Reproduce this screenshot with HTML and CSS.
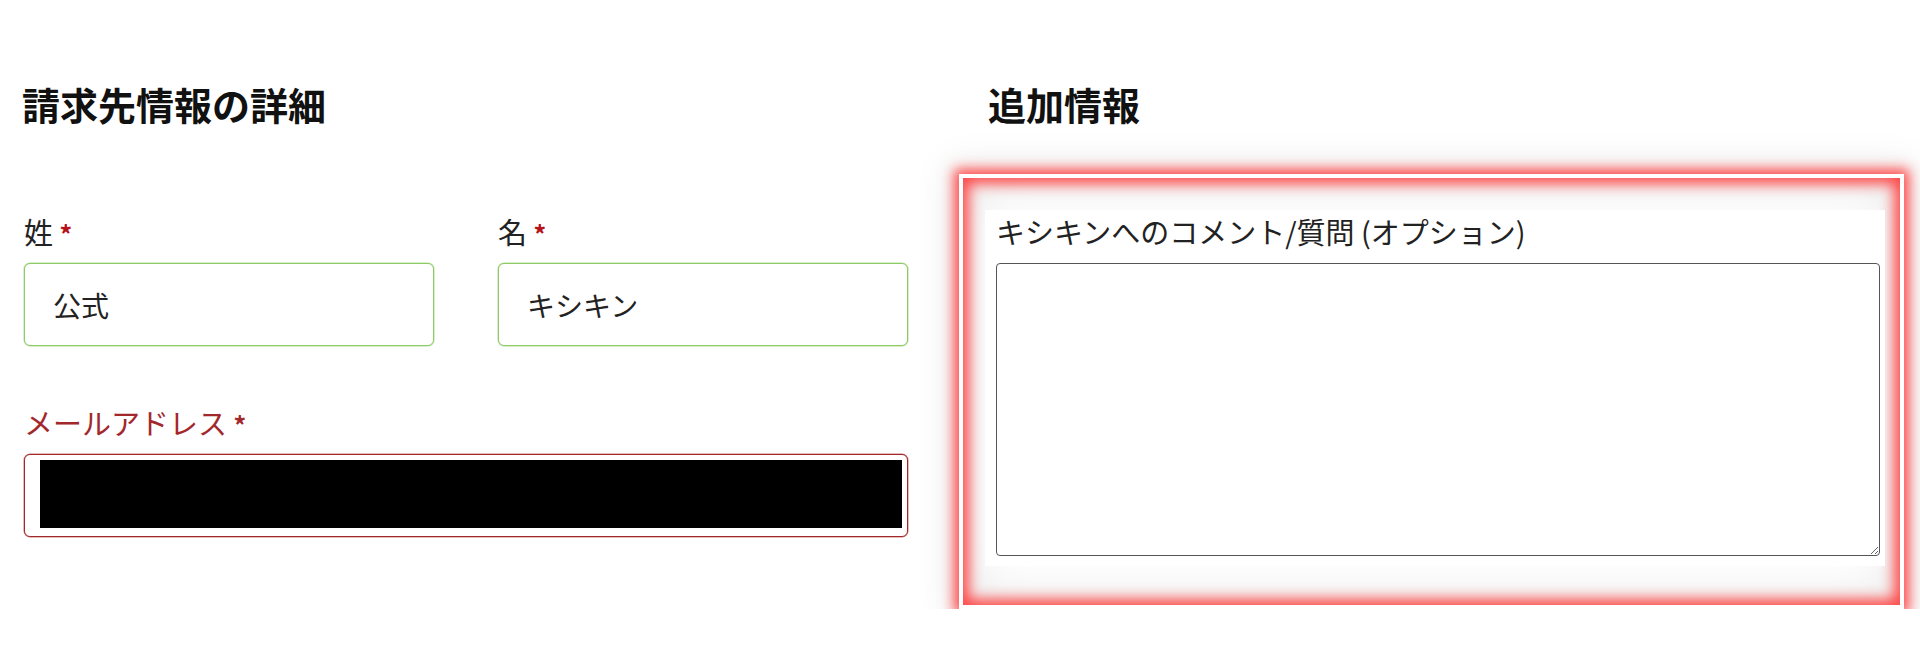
FILE: index.html
```html
<!DOCTYPE html>
<html lang="ja">

<head>
    <meta charset="UTF-8">
    <meta name="viewport" content="width=device-width, initial-scale=1.0">
    <title>チェックアウト</title>
    <link rel="stylesheet" href="styles.css">
</head>

<body>

    <div class="checkout">

        <div class="billing">
            <h3>請求先情報の詳細</h3>

            <div class="fields">
                <div class="nameRow">
                    <p class="formRow">
                        <label for="lastName">姓 <abbr class="required">*</abbr></label>
                        <input type="text" id="lastName" class="inputText is-valid" value="公式">
                    </p>
                    <p class="formRow">
                        <label for="firstName">名 <abbr class="required">*</abbr></label>
                        <input type="text" id="firstName" class="inputText is-valid" value="キシキン">
                    </p>
                </div>

                <p class="formRow is-invalid">
                    <label for="email">メールアドレス <abbr class="required">*</abbr></label>
                    <span class="inputText redactedBox" id="email"><span class="redacted"></span></span>
                </p>
            </div>
        </div>

        <div class="additional">
            <h3>追加情報</h3>

            <div class="highlight">
                <p class="formRow notes">
                    <label for="orderComments">キシキンへのコメント/質問 (オプション)</label>
                    <textarea id="orderComments"></textarea>
                </p>
            </div>
        </div>

    </div>

</body>

</html>
```

FILE: styles.css
```css
body {
    background: white;
    margin: 0px;
    color: #222;
    font-family: 'Noto Sans CJK JP', 'Noto Sans', sans-serif;
}

.checkout {
    display: grid;
    grid-template-columns: 884px 945px;
    column-gap: 51px;
    padding: 80px 0px 0px 24px;
}

h3 {
    margin: 0px 0px 46px;
    font-size: 38px;
    line-height: 48px;
    font-weight: bold;
    color: #111;
}

.billing h3 {
    margin-left: -2px;
}

.additional h3 {
    padding-left: 29px;
}

.fields {
    padding-top: 39px;
}

.nameRow {
    display: grid;
    grid-template-columns: 1fr 1fr;
    column-gap: 64px;
}

.formRow {
    margin: 0px 0px 58px;
}

.formRow label {
    display: block;
    font-size: 29px;
    line-height: 36px;
    margin-bottom: 12px;
}

.required {
    color: #b5121b;
    font-weight: bold;
    text-decoration: none;
    font-size: 25px;
}

.inputText {
    display: block;
    box-sizing: border-box;
    width: 100%;
    height: 83px;
    padding: 0px 20px 0px 28px;
    font-family: inherit;
    font-size: 28px;
    color: #222;
    background: white;
    border: 1px solid #ccc;
    border-radius: 6px;
    outline: none;
}

.inputText.is-valid {
    border-color: #8dcb68;
    box-shadow: 0px 0px 0px 0.5px #b3de98;
}

.is-invalid label,
.is-invalid .required {
    color: #a3282c;
}

.is-invalid .inputText {
    border-color: #a3282c;
    box-shadow: 0px 0px 0px 0.5px #c97a7c;
}

.redactedBox {
    padding: 5px 5px 8px 15px;
}

.redacted {
    display: block;
    height: 100%;
    background: black;
}

.highlight {
    box-sizing: border-box;
    height: 435px;
    border: 4px solid white;
    padding: 32px 15px 0px 22px;
    box-shadow: 0px 0px 12px 5px rgba(255, 45, 45, 0.85),
        0px 0px 34px 12px rgba(0, 0, 0, 0.07),
        inset 0px 0px 14px 6px rgba(255, 45, 45, 0.85),
        inset 0px 0px 44px 16px rgba(0, 0, 0, 0.07);
}

.notes {
    margin: 0px;
    padding: 3px 5px 10px 11px;
    background: white;
}

.notes label {
    margin-bottom: 14px;
}

.notes textarea {
    display: block;
    box-sizing: border-box;
    width: 100%;
    height: 293px;
    margin: 0px;
    border: 1px solid #555;
    border-radius: 4px;
    font-family: inherit;
    font-size: 24px;
}
```
